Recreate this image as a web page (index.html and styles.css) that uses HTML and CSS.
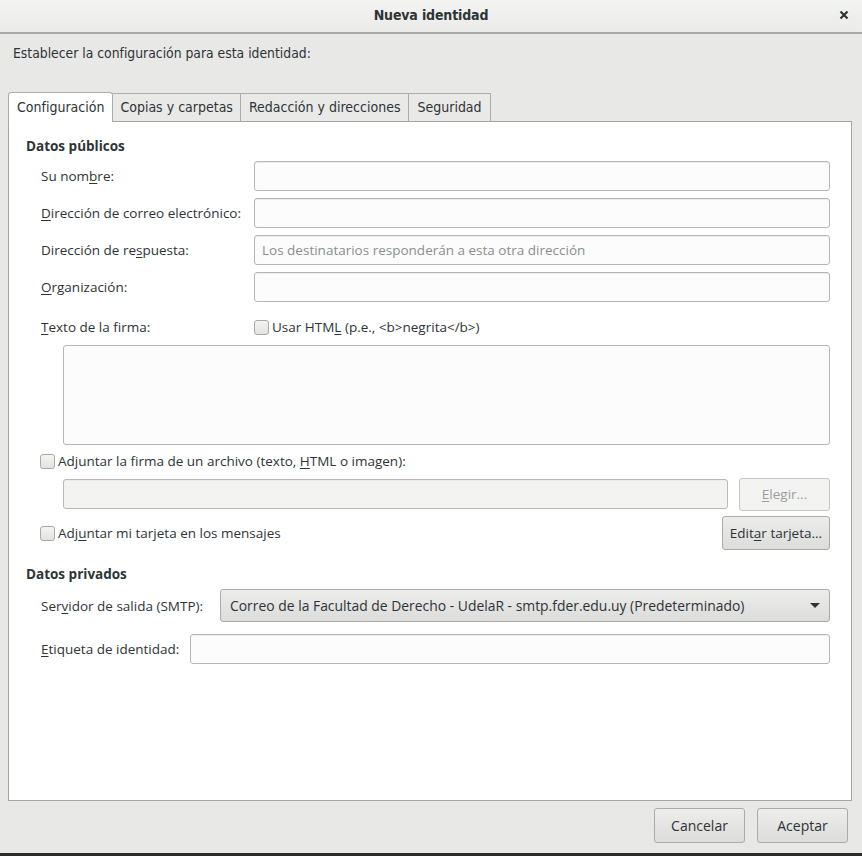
FILE: index.html
```html
<!DOCTYPE html>
<html lang="es">
<head>
<meta charset="utf-8">
<title>Nueva identidad</title>
<link rel="stylesheet" href="styles.css">
</head>
<body>
<div class="dialog">
  <header class="titlebar">
    <span class="title">Nueva identidad</span>
    <span class="close">
      <svg width="10" height="10" viewBox="0 0 10 10"><path d="M1.5 1.5 L8.5 8.5 M8.5 1.5 L1.5 8.5" stroke="#2e3436" stroke-width="2.2" stroke-linecap="butt"/></svg>
    </span>
  </header>
  <div class="body">
    <p class="intro">Establecer la configuración para esta identidad:</p>
    <div class="tabs">
      <div class="tab selected">Configuración</div>
      <div class="tab">Copias y carpetas</div>
      <div class="tab">Redacción y direcciones</div>
      <div class="tab">Seguridad</div>
    </div>
    <div class="panel">
      <h2 class="section">Datos públicos</h2>
      <div class="grid">
        <label class="lbl">Su nom<u>b</u>re:</label>
        <div class="input"></div>
        <label class="lbl"><span><u>D</u>irección de correo electrónico:</span></label>
        <div class="input"></div>
        <label class="lbl"><span>Dirección de re<u>s</u>puesta:</span></label>
        <div class="input placeholder">Los destinatarios responderán a esta otra dirección</div>
        <label class="lbl"><span><u>O</u>rganización:</span></label>
        <div class="input"></div>
      </div>
      <div class="sigrow">
        <label class="lbl sig-lbl"><span><u>T</u>exto de la firma:</span></label>
        <div class="check"><span class="box"></span><span>Usar HTM<u>L</u> (p.e., &lt;b&gt;negrita&lt;/b&gt;)</span></div>
      </div>
      <div class="textarea"></div>
      <div class="check attach"><span class="box"></span><span>Adjuntar la firma de un archivo (texto, <u>H</u>TML o imagen):</span></div>
      <div class="filerow">
        <div class="input disabled"></div>
        <div class="btn disabled-btn"><span><u>E</u>legir...</span></div>
      </div>
      <div class="cardrow">
        <div class="check"><span class="box"></span><span>Adj<u>u</u>ntar mi tarjeta en los mensajes</span></div>
        <div class="btn"><span>Edit<u>a</u>r tarjeta...</span></div>
      </div>
      <h2 class="section private">Datos privados</h2>
      <div class="row smtp">
        <label class="lbl"><span>Ser<u>v</u>idor de salida (SMTP):</span></label>
        <div class="select">
          <span>Correo de la Facultad de Derecho - UdelaR - smtp.fder.edu.uy (Predeterminado)</span>
          <svg width="10" height="6" viewBox="0 0 10 6"><path d="M0 0 L10 0 L5 5 Z" fill="#2e3436"/></svg>
        </div>
      </div>
      <div class="row label-row">
        <label class="lbl"><span><u>E</u>tiqueta de identidad:</span></label>
        <div class="input"></div>
      </div>
    </div>
    <div class="footer">
      <div class="btn foot">Cancelar</div>
      <div class="btn foot">Aceptar</div>
    </div>
  </div>
</div>
</body>
</html>
```

FILE: styles.css
```css
* { box-sizing: border-box; }
html, body { margin: 0; padding: 0; }
body {
  width: 862px;
  height: 856px;
  background: #e8e8e7;
  font-family: "Open Sans", "Noto Sans", sans-serif;
  font-size: 13.5px;
  color: #2e3436;
  overflow: hidden;
}
u { text-decoration: underline; text-underline-offset: 2px; }
.dialog {
  width: 862px;
  height: 856px;
  display: flex;
  flex-direction: column;
  border-bottom: 3px solid #2b2b2b;
}
.titlebar {
  height: 34px;
  flex: 0 0 34px;
  background: linear-gradient(#f3f3f2, #ebebea);
  border-bottom: 2px solid #a9a9a7;
  display: flex;
  align-items: center;
  justify-content: center;
  position: relative;
}
.title {
  font-family: "DejaVu Sans Condensed", "Open Sans", sans-serif;
  font-weight: bold;
  font-size: 14px;
  color: #2e3436;
  letter-spacing: -0.15px;
  margin-top: -3px;
}
.close {
  position: absolute;
  right: 13px;
  top: 10px;
  width: 10px;
  height: 10px;
  display: flex;
}
.body {
  flex: 1;
  display: flex;
  flex-direction: column;
  padding: 0 10px 0 8px;
}
.intro {
  margin: 0;
  padding: 11px 0 0 5px;
  height: 58px;
  font-family: "DejaVu Sans Condensed", "Open Sans", sans-serif;
  font-size: 13.8px;
  color: #2e3436;
}
.tabs {
  display: flex;
  height: 29px;
  align-items: flex-end;
}
.tab {
  height: 28px;
  padding: 0 7px;
  line-height: 27px;
  background: #e9e9e8;
  border: 1px solid #acacab;
  border-bottom: none;
  border-left: none;
  font-family: "DejaVu Sans Condensed", "Open Sans", sans-serif;
  font-size: 14px;
  color: #2e3436;
}
.tab:nth-child(3) { padding: 0 8px 0 8px; }
.tab:nth-child(4) { padding: 0 8px 0 8px; }
.tab.selected {
  height: 30px;
  margin-bottom: -1px;
  background: #ffffff;
  border-left: 1px solid #acacab;
  border-radius: 3px 3px 0 0;
  padding: 0 8px 0 8px;
  line-height: 28px;
  position: relative;
  z-index: 1;
}
.panel {
  height: 680px;
  background: #ffffff;
  border: 1px solid #a5a5a4;
  padding: 14px 21px 0 17px;
  display: flex;
  flex-direction: column;
}
.section {
  margin: 0;
  font-size: 13.5px;
  font-weight: bold;
  line-height: 20px;
  color: #2e3436;
}
.grid {
  margin-top: 5px;
  padding-left: 15px;
  display: grid;
  grid-template-columns: 213px 1fr;
  row-gap: 7px;
}
.lbl {
  display: flex;
  align-items: center;
  height: 30px;
  white-space: nowrap;
  color: #2e3436;
}
.input {
  height: 30px;
  background: #fcfcfc;
  border: 1px solid #b6b6b3;
  border-radius: 3px;
  box-shadow: inset 0 1px 0 #ececeb;
}
.input.placeholder {
  color: #8a8e8e;
  display: flex;
  align-items: center;
  padding-left: 7px;
  font-size: 13.5px;
}
.sigrow {
  display: flex;
  align-items: center;
  margin-top: 15px;
  padding-left: 15px;
  height: 20px;
}
.sig-lbl { width: 213px; height: 20px; }
.check {
  display: flex;
  align-items: center;
  white-space: nowrap;
  color: #2e3436;
}
.box {
  width: 15px;
  height: 15px;
  border: 1px solid #a9a9a7;
  border-radius: 3px;
  background: linear-gradient(#f4f4f3, #e2e2e1);
  margin-right: 3px;
  flex: 0 0 15px;
}
.textarea {
  margin: 8px 0 0 37px;
  height: 100px;
  border: 1px solid #b6b6b3;
  border-radius: 3px;
  background: #fcfcfc;
}
.attach {
  margin-top: 6px;
  padding-left: 14px;
  height: 20px;
}
.filerow {
  display: flex;
  align-items: center;
  gap: 11px;
  margin: 6px 0 0 37px;
  height: 34px;
}
.filerow .input {
  flex: 1;
  height: 30px;
}
.input.disabled {
  background: #f3f3f2;
  border-color: #b8b8b6;
}
.btn {
  height: 34px;
  padding: 0 8px;
  display: flex;
  align-items: center;
  justify-content: center;
  border: 1px solid #ababa9;
  border-radius: 3px;
  background: linear-gradient(#ededec, #dcdcdb);
  color: #2e3436;
  white-space: nowrap;
}
.disabled-btn {
  width: 91px;
  height: 33px;
  background: #f3f3f2;
  border-color: #c4c4c2;
  color: #9a9d9d;
}
.cardrow {
  display: flex;
  align-items: center;
  justify-content: space-between;
  margin-top: 5px;
  padding-left: 14px;
  height: 34px;
}
.cardrow .btn { width: 108px; }
.private { margin-top: 14px; }
.row {
  display: flex;
  align-items: center;
  padding-left: 15px;
}
.row .lbl { margin-right: 11px; }
.smtp { margin-top: 5px; }
.smtp .lbl { width: 168px; }
.select {
  flex: 1;
  height: 33px;
  display: flex;
  align-items: center;
  justify-content: space-between;
  padding: 0 9px 0 9px;
  border: 1px solid #ababa9;
  border-radius: 3px;
  background: linear-gradient(#ededec, #dcdcdb);
  white-space: nowrap;
  font-size: 13.9px;
}
.label-row { margin-top: 12px; }
.label-row .input { flex: 1; }
.footer {
  display: flex;
  justify-content: flex-end;
  gap: 12px;
  padding-top: 7px;
  padding-right: 4px;
}
.btn.foot {
  width: 91px;
  height: 35px;
  font-size: 14px;
}
```
